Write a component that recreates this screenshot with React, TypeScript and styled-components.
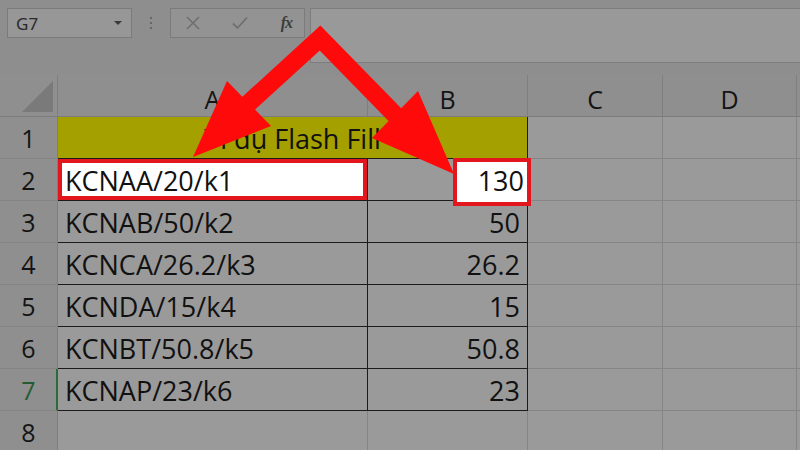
import React from "react";
import styled, { createGlobalStyle } from "styled-components";

const GlobalStyle = createGlobalStyle`
  html, body {
    margin: 0;
    padding: 0;
    background: #8e8e8e;
    overflow: hidden;
  }
  body {
    font-family: "Open Sans", "Noto Sans", sans-serif;
  }
`;

const GRID = "#858585";
const TABLE = "#1b1b1b";
const RED = "#e3161d";

const S = {
  Screen: styled.div`
    position: relative;
    width: 800px;
    height: 450px;
    overflow: hidden;
    display: flex;
    flex-direction: column;
    background: #8e8e8e;
  `,
  Toolbar: styled.div`
    height: 75px;
    flex: 0 0 75px;
    display: flex;
    align-items: flex-start;
    padding: 8px 0 0 7px;
    box-sizing: border-box;
  `,
  NameBox: styled.div`
    width: 125px;
    height: 30px;
    box-sizing: border-box;
    border: 1px solid #7b7b7b;
    background: #979797;
    display: flex;
    align-items: center;
    justify-content: space-between;
    padding: 0 9px 0 8px;
    font-family: "Noto Sans", sans-serif;
    font-size: 17px;
    color: #2a2a2a;
  `,
  Caret: styled.span`
    width: 0;
    height: 0;
    border-left: 4px solid transparent;
    border-right: 4px solid transparent;
    border-top: 4px solid #3a3a3a;
  `,
  Dots: styled.div`
    width: 38px;
    height: 30px;
    display: flex;
    flex-direction: column;
    align-items: center;
    justify-content: center;
    gap: 3px;
    & > span {
      width: 2px;
      height: 2px;
      background: #5a5a5a;
      border-radius: 50%;
    }
  `,
  FuncGroup: styled.div`
    width: 135px;
    height: 30px;
    box-sizing: border-box;
    border: 1px solid #7b7b7b;
    background: #939393;
    display: flex;
    align-items: center;
    padding: 0 12px 0 15px;
    justify-content: space-between;
  `,
  Fx: styled.span`
    font-family: "Liberation Serif", serif;
    font-style: italic;
    font-weight: bold;
    font-size: 16px;
    color: #3c3c3c;
    letter-spacing: -1px;
  `,
  FormulaInput: styled.div`
    flex: 1;
    height: 55px;
    margin-left: 5px;
    box-sizing: border-box;
    border: 1px solid #7d7d7d;
    border-right: none;
    background: #999999;
  `,
  Sheet: styled.div`
    display: grid;
    grid-template-columns: 58px 310px 160px 135px 134px 20px;
    grid-auto-rows: 42px;
  `,
  Corner: styled.div`
    position: relative;
    background: #8f8f8f;
    border-right: 1px solid #7e7e7e;
    border-bottom: 1px solid #7c7c7c;
    box-sizing: border-box;
    &::after {
      content: "";
      position: absolute;
      right: 4px;
      bottom: 4px;
      width: 0;
      height: 0;
      border-left: 31px solid transparent;
      border-bottom: 31px solid #7a7a7a;
    }
  `,
  ColHeader: styled.div`
    background: #8f8f8f;
    border-right: 1px solid #7f7f7f;
    border-bottom: 1px solid #7c7c7c;
    box-sizing: border-box;
    display: flex;
    align-items: center;
    justify-content: center;
    padding-top: 6px;
    font-size: 25px;
    color: #141414;
  `,
  RowHeader: styled.div<{ $active?: boolean }>`
    background: #8f8f8f;
    border-right: ${(p) => (p.$active ? "2px solid #2b6a3d" : "1px solid #7e7e7e")};
    border-bottom: 1px solid #848484;
    box-sizing: border-box;
    display: flex;
    align-items: center;
    justify-content: center;
    padding-left: ${(p) => (p.$active ? "1px" : "0")};
    font-size: 25px;
    color: ${(p) => (p.$active ? "#235c33" : "#141414")};
  `,
  Cell: styled.div<{ $table?: boolean; $right?: boolean; $span?: number; $fill?: string; $mark?: boolean }>`
    position: relative;
    grid-column: span ${(p) => p.$span ?? 1};
    background: ${(p) => p.$fill ?? "#9a9a9a"};
    border-right: 1px solid ${(p) => (p.$table ? TABLE : GRID)};
    border-bottom: 1px solid ${(p) => (p.$table ? TABLE : GRID)};
    box-sizing: border-box;
    display: flex;
    align-items: center;
    justify-content: ${(p) => (p.$right ? "flex-end" : "flex-start")};
    padding: 2px 7px 0 7px;
    font-size: 27px;
    color: #111;
    white-space: nowrap;
    box-shadow: ${(p) => (p.$mark ? `inset 0 0 0 4px ${RED}` : "none")};
  `,
  Title: styled.span`
    width: 100%;
    text-align: center;
  `,
  Highlight: styled.div`
    position: absolute;
    z-index: 1;
    left: 85px;
    right: -4px;
    top: -1px;
    bottom: -6px;
    box-sizing: border-box;
    border: 4px solid ${RED};
    background: #fff;
    display: flex;
    align-items: center;
    justify-content: flex-end;
    padding: 0 3px 3px 0;
  `,
  Overlay: styled.svg`
    position: absolute;
    z-index: 2;
    left: 0;
    top: 0;
    width: 800px;
    height: 450px;
    pointer-events: none;
  `,
};

const rows: [string, string][] = [
  ["KCNAA/20/k1", "130"],
  ["KCNAB/50/k2", "50"],
  ["KCNCA/26.2/k3", "26.2"],
  ["KCNDA/15/k4", "15"],
  ["KCNBT/50.8/k5", "50.8"],
  ["KCNAP/23/k6", "23"],
];

const EmptyTail = () => (
  <>
    <S.Cell />
    <S.Cell />
    <S.Cell />
  </>
);

const App: React.FC = () => {
  return (
    <S.Screen>
      <GlobalStyle />
      <S.Toolbar>
        <S.NameBox>
          G7
          <S.Caret />
        </S.NameBox>
        <S.Dots>
          <span />
          <span />
          <span />
        </S.Dots>
        <S.FuncGroup>
          <svg width="14" height="14" viewBox="0 0 14 14">
            <path d="M1 1 L13 13 M13 1 L1 13" stroke="#6f6f6f" strokeWidth="1.6" />
          </svg>
          <svg width="16" height="14" viewBox="0 0 16 14">
            <path d="M1 7.5 L5.5 12 L15 1.5" stroke="#6f6f6f" strokeWidth="1.8" fill="none" />
          </svg>
          <S.Fx>fx</S.Fx>
        </S.FuncGroup>
        <S.FormulaInput />
      </S.Toolbar>

      <S.Sheet>
        <S.Corner />
        {["A", "B", "C", "D", ""].map((c, i) => (
          <S.ColHeader key={i}>{c}</S.ColHeader>
        ))}

        <S.RowHeader>1</S.RowHeader>
        <S.Cell $span={2} $fill="#a4a000" $table>
          <S.Title>Ví dụ Flash Fill</S.Title>
        </S.Cell>
        <EmptyTail />

        {rows.map(([code, value], i) => (
          <React.Fragment key={code}>
            <S.RowHeader $active={i === 5}>{i + 2}</S.RowHeader>
            <S.Cell $table $mark={i === 0} $fill={i === 0 ? "#fff" : undefined}>
              {code}
            </S.Cell>
            <S.Cell $table $right>
              {i === 0 ? <S.Highlight>{value}</S.Highlight> : value}
            </S.Cell>
            <EmptyTail />
          </React.Fragment>
        ))}

        <S.RowHeader>8</S.RowHeader>
        <S.Cell />
        <S.Cell />
        <EmptyTail />
      </S.Sheet>

      <S.Overlay viewBox="0 0 800 450">
        <polyline
          points="238,113 320,38 405,125"
          fill="none"
          stroke="#ff0a0a"
          strokeWidth="18"
          strokeLinejoin="miter"
        />
        <polygon points="227,81 271,126 193,157" fill="#ff0a0a" />
        <polygon points="418,91 372,138 454,174" fill="#ff0a0a" />
      </S.Overlay>
    </S.Screen>
  );
};

export default App;
